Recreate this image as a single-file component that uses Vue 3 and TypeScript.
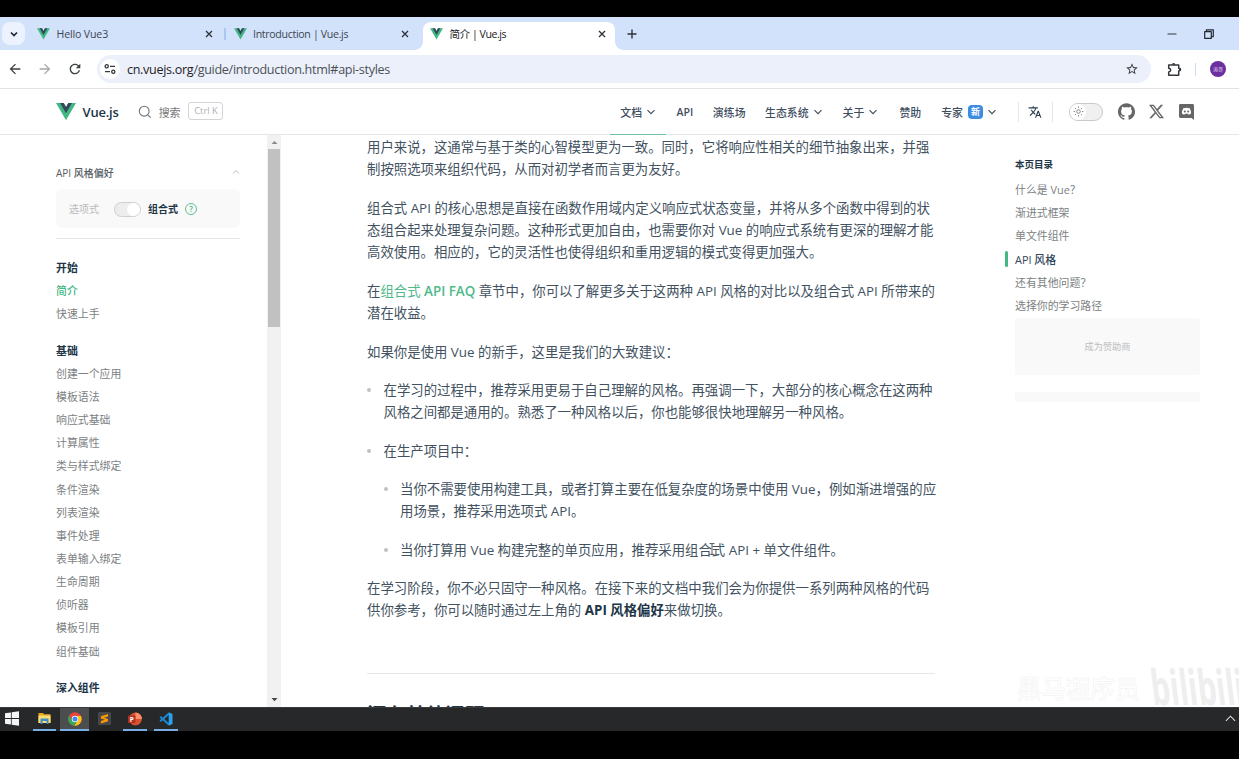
<script setup lang="ts">
interface Tab { title: string; active?: boolean; cls: string }
interface Group { title: string; items: string[] }

const tabs: Tab[] = [
  { title: 'Hello Vue3', cls: 't1' },
  { title: 'Introduction | Vue.js', cls: 't2' },
  { title: '简介 | Vue.js', active: true, cls: 't3' },
]
const nav = [
  { label: '文档', menu: true, current: true, cls: 'n1' },
  { label: 'API', cls: 'n2' },
  { label: '演练场', cls: 'n3' },
  { label: '生态系统', menu: true, cls: 'n4' },
  { label: '关于', menu: true, cls: 'n5' },
  { label: '赞助', cls: 'n6' },
  { label: '专家', menu: true, badge: '新', cls: 'n7' },
]
const groups: Group[] = [
  { title: '开始', items: ['简介', '快速上手'] },
  {
    title: '基础',
    items: ['创建一个应用', '模板语法', '响应式基础', '计算属性', '类与样式绑定', '条件渲染', '列表渲染',
      '事件处理', '表单输入绑定', '生命周期', '侦听器', '模板引用', '组件基础'],
  },
  { title: '深入组件', items: [] },
]
const outline = ['什么是 Vue？', '渐进式框架', '单文件组件', 'API 风格', '还有其他问题？', '选择你的学习路径']
</script>

<template>
  <div class="screen">
    <svg class="defs" width="0" height="0">
      <symbol id="vue" viewBox="0 0 128 112">
        <path fill="#42b883" d="M78.8 0 64 25.4 49.2 0H0l64 110L128 0z" />
        <path fill="#35495e" d="M78.8 0 64 25.4 49.2 0H25.6L64 66l38.4-66z" />
      </symbol>
      <symbol id="down" viewBox="0 0 10 10">
        <path d="M1.5 3.2 5 6.7l3.5-3.5" fill="none" stroke="currentColor" stroke-width="1.15" />
      </symbol>
    </svg>

    <div class="tabstrip">
      <div class="tabsearch">
        <svg width="10" height="10" viewBox="0 0 10 10"><path d="M2 3.5 5 6.5l3-3" fill="none" stroke="#1f2937" stroke-width="1.7" /></svg>
      </div>
      <div v-for="t in tabs" :key="t.title" class="tab" :class="[t.cls, { active: t.active }]">
        <svg class="fav"><use href="#vue" /></svg>
        <span class="tabtitle">{{ t.title }}</span>
        <svg class="close" viewBox="0 0 8 8"><path d="M1 1l6 6M7 1 1 7" stroke="#2b3038" stroke-width="1.3" /></svg>
      </div>
      <svg class="plus" viewBox="0 0 10 10"><path d="M5 .5v9M.5 5h9" stroke="#30353d" stroke-width="1.4" /></svg>
      <div class="grow"></div>
      <svg class="min" viewBox="0 0 10 10"><path d="M.5 5h9" stroke="#30353d" /></svg>
      <svg class="max" viewBox="0 0 10 10"><path d="M.7 2.7h6.6v6.6H.7zM2.4 2.5V.8h6.9v6.8H7.5" fill="none" stroke="#222831" stroke-width="1.2" stroke-linejoin="round" /></svg>
    </div>

    <div class="toolbar">
      <svg class="ic back" viewBox="0 0 24 24"><path fill="#3c4043" d="M20 11H7.83l5.59-5.59L12 4l-8 8 8 8 1.41-1.41L7.83 13H20v-2z" /></svg>
      <svg class="ic fwd" viewBox="0 0 24 24"><path fill="#a4a7ab" d="M4 11h12.17l-5.59-5.59L12 4l8 8-8 8-1.41-1.41L16.17 13H4z" /></svg>
      <svg class="ic reload" viewBox="0 0 24 24"><path fill="#3c4043" d="M17.65 6.35C16.2 4.9 14.21 4 12 4c-4.42 0-7.99 3.58-7.99 8s3.57 8 7.99 8c3.73 0 6.84-2.55 7.73-6h-2.08c-.82 2.33-3.04 4-5.65 4-3.31 0-6-2.69-6-6s2.69-6 6-6c1.66 0 3.14.69 4.22 1.78L13 11h7V4l-2.35 2.35z" /></svg>
      <div class="omnibox">
        <div class="site">
          <svg width="12" height="12" viewBox="0 0 12 12" fill="none" stroke="#33373c" stroke-width="1.3"><circle cx="2.7" cy="3.3" r="1.6" /><path d="M6 3.3h5M1 8.7h5" /><circle cx="9.3" cy="8.7" r="1.6" /></svg>
        </div>
        <span class="url"><b>cn.vuejs.org</b>/guide/introduction.html#api-styles</span>
        <svg class="star" viewBox="0 0 24 24"><path fill="#3c4043" d="M22 9.24l-7.19-.62L12 2 9.19 8.63 2 9.24l5.46 4.73L5.82 21 12 17.27 18.18 21l-1.63-7.03L22 9.24zM12 15.4l-3.76 2.27 1-4.28-3.32-2.88 4.38-.38L12 6.1l1.71 4.04 4.38.38-3.32 2.88 1 4.28L12 15.4z" /></svg>
      </div>
      <svg class="puzzle" viewBox="0 0 15 15"><path d="M1.7 3h10v3.2q1.8 0 1.8 1.4t-1.8 1.4v4.3h-10V10q2-.3 2-1.9t-2-1.9z" fill="none" stroke="#33373c" stroke-width="1.5" stroke-linejoin="round" /><path d="M5 2.8q0-1.9 1.7-1.9t1.7 1.9zM12 6q2 0 2 1.6t-2 1.6z" fill="#33373c" /></svg>
      <i class="tdiv"></i>
      <div class="avatar">涛哥</div>
    </div>

    <header class="head">
      <svg class="logo"><use href="#vue" /></svg>
      <span class="brand">Vue.js</span>
      <svg class="search" viewBox="0 0 14 14" fill="none" stroke="#6f7377" stroke-width="1.1"><circle cx="6.2" cy="6.2" r="4.9" /><path d="m9.8 9.8 2.8 2.8" /></svg>
      <span class="stext">搜索</span>
      <kbd>Ctrl K</kbd>
      <div class="grow"></div>
      <nav>
        <a v-for="n in nav" :key="n.label" :class="[n.cls, { current: n.current }]">
          <span>{{ n.label }}</span>
          <em v-if="n.badge">{{ n.badge }}</em>
          <svg v-if="n.menu" class="chev"><use href="#down" /></svg>
        </a>
      </nav>
      <i class="hdiv d1"></i>
      <svg class="lang" viewBox="0 0 24 24"><path fill="#2c3e50" d="M12.87 15.07l-2.54-2.51.03-.03c1.74-1.94 2.98-4.17 3.71-6.53H17V4h-7V2H8v2H1v1.99h11.17C11.5 7.92 10.44 9.75 9 11.35 8.07 10.32 7.3 9.19 6.69 8h-2c.73 1.63 1.73 3.17 2.98 4.56l-5.09 5.02L4 19l5-5 3.11 3.11.76-2.04zM18.5 10h-2L12 22h2l1.12-3h4.75L21 22h2l-4.5-12zm-2.62 7l1.62-4.33L19.12 17h-3.24z" /></svg>
      <i class="hdiv d2"></i>
      <div class="theme">
        <div class="knob">
          <svg width="11" height="11" viewBox="0 0 12 12" fill="none" stroke="#777" stroke-width=".9"><circle cx="6" cy="6" r="2" /><path d="M6 .6v1.6M6 9.8v1.6M.6 6h1.6M9.8 6h1.6M2.2 2.2l1.1 1.1M8.7 8.7l1.1 1.1M2.2 9.8l1.1-1.1M8.7 3.3l1.1-1.1" /></svg>
        </div>
      </div>
      <svg class="gh" viewBox="0 0 24 24"><path fill="#666" d="M12 .297c-6.63 0-12 5.373-12 12 0 5.303 3.438 9.8 8.205 11.385.6.113.82-.258.82-.577 0-.285-.01-1.04-.015-2.04-3.338.724-4.042-1.61-4.042-1.61C4.422 18.07 3.633 17.7 3.633 17.7c-1.087-.744.084-.729.084-.729 1.205.084 1.838 1.236 1.838 1.236 1.07 1.835 2.809 1.305 3.495.998.108-.776.417-1.305.76-1.605-2.665-.3-5.466-1.332-5.466-5.93 0-1.31.465-2.38 1.235-3.22-.135-.303-.54-1.523.105-3.176 0 0 1.005-.322 3.3 1.23.96-.267 1.98-.399 3-.405 1.02.006 2.04.138 3 .405 2.28-1.552 3.285-1.23 3.285-1.23.645 1.653.24 2.873.12 3.176.765.84 1.23 1.91 1.23 3.22 0 4.61-2.805 5.625-5.475 5.92.42.36.81 1.096.81 2.22 0 1.606-.015 2.896-.015 3.286 0 .315.21.69.825.57C20.565 22.092 24 17.592 24 12.297c0-6.627-5.373-12-12-12" /></svg>
      <svg class="xx" viewBox="0 0 24 24"><path fill="#666" d="M18.901 1.153h3.68l-8.04 9.19L24 22.846h-7.406l-5.8-7.584-6.638 7.584H.474l8.6-9.83L0 1.154h7.594l5.243 6.932ZM17.61 20.644h2.039L6.486 3.24H4.298Z" /></svg>
      <svg class="dc" viewBox="0 0 16 17"><path fill="#666" d="M1.5 0h13Q16 0 16 1.5V17l-2.6-2.2H1.5Q0 14.8 0 13.3V1.5Q0 0 1.5 0z" /><path fill="#fff" d="M4.6 4.4Q8 3.4 11.4 4.4 13 7 12.9 10.2 11.7 11.3 10.3 11.3L9.7 10.4H6.3l-.6.9Q4.3 11.3 3.1 10.2 3 7 4.6 4.4z" /><circle cx="6.2" cy="8" r="1.1" fill="#666" /><circle cx="9.8" cy="8" r="1.1" fill="#666" /></svg>
    </header>

    <div class="page">
      <aside class="side">
        <div class="pref">
          <span>API 风格偏好</span>
          <svg width="8" height="8" viewBox="0 0 8 8"><path d="M1 5.5 4 2.5l3 3" fill="none" stroke="#aaa" stroke-width=".8" /></svg>
        </div>
        <div class="switchbox">
          <span class="opt">选项式</span>
          <div class="switch"><i></i></div>
          <span class="comp">组合式</span>
          <span class="help">?</span>
        </div>
        <section v-for="(g, gi) in groups" :key="g.title">
          <h2>{{ g.title }}</h2>
          <a v-for="(it, i) in g.items" :key="it" :class="{ on: gi === 0 && i === 0 }">{{ it }}</a>
        </section>
      </aside>
      <div class="scroll">
        <svg width="13" height="14" viewBox="0 0 13 14"><path d="M3.5 9 6.5 6l3 3z" fill="#8a8a8a" /></svg>
        <div class="thumb"></div>
        <div class="grow"></div>
        <svg width="13" height="14" viewBox="0 0 13 14"><path d="M3.5 6h6l-3 3.2z" fill="#444" /></svg>
      </div>
      <main class="doc">
        <p><span class="l">用户来说，这通常与基于类的心智模型更为一致。同时，它将响应性相关的细节抽象出来，并强</span><span class="l">制按照选项来组织代码，从而对初学者而言更为友好。</span></p>
        <p><span class="l">组合式 API 的核心思想是直接在函数作用域内定义响应式状态变量，并将从多个函数中得到的状</span><span class="l">态组合起来处理复杂问题。这种形式更加自由，也需要你对 Vue 的响应式系统有更深的理解才能</span><span class="l">高效使用。相应的，它的灵活性也使得组织和重用逻辑的模式变得更加强大。</span></p>
        <p><span class="l">在<a>组合式 <b>API FAQ</b></a> 章节中，你可以了解更多关于这两种 API 风格的对比以及组合式 API 所带来的</span><span class="l">潜在收益。</span></p>
        <p><span class="l">如果你是使用 Vue 的新手，这里是我们的大致建议：</span></p>
        <ul>
          <li><p><span class="l">在学习的过程中，推荐采用更易于自己理解的风格。再强调一下，大部分的核心概念在这两种</span><span class="l">风格之间都是通用的。熟悉了一种风格以后，你也能够很快地理解另一种风格。</span></p></li>
          <li>
            <p><span class="l">在生产项目中：</span></p>
            <ul>
              <li><p><span class="l">当你不需要使用构建工具，或者打算主要在低复杂度的场景中使用 Vue，例如渐进增强的应</span><span class="l">用场景，推荐采用选项式 API。</span></p></li>
              <li><p><span class="l">当你打算用 Vue 构建完整的单页应用，推荐采用组合式 API + 单文件组件。</span></p></li>
            </ul>
          </li>
        </ul>
        <p><span class="l">在学习阶段，你不必只固守一种风格。在接下来的文档中我们会为你提供一系列两种风格的代码</span><span class="l">供你参考，你可以随时通过左上角的 <strong>API 风格偏好</strong>来做切换。</span></p>
        <h2>还有其他问题？</h2>
        <svg class="caret" viewBox="0 0 6 12"><path d="M.5 .6h5M.5 11.4h5M3 .6v10.8" stroke="#444" stroke-width=".9" /></svg>
      </main>
      <aside class="toc">
        <h3>本页目录</h3>
        <a v-for="o in outline" :key="o" :class="{ on: o === 'API 风格' }">{{ o }}</a>
        <div class="sponsor">成为赞助商</div>
        <div class="slot"></div>
      </aside>
      <div class="wm1">黑马程序员</div>
      <div class="wm2">bilibili</div>
    </div>

    <div class="taskbar">
      <div class="task win"><svg width="14" height="15" viewBox="0 0 14 15" fill="#f4f4f4"><path d="M0 2.2 5.9 1.4v5.7H0zM6.7 1.3 14 .3v6.8H6.7zM0 7.9h5.9v5.7L0 12.8zM6.7 7.9H14v6.8l-7.3-1z" /></svg></div>
      <div class="task ex run"><svg width="13" height="13" viewBox="0 0 13 13"><path fill="#e9a820" d="M.5 1H5l1 1.3h6.5V11H.5z" /><path fill="#fbdc79" d="M.5 3.6h12V11H.5z" /><path fill="#3f8fc4" d="M2.5 6.5h8V12h-2V9h-4v3h-2z" /></svg></div>
      <div class="task ch run"><svg width="14" height="14" viewBox="0 0 14 14"><circle cx="7" cy="7" r="6.7" fill="#e8453c" /><path fill="#34a853" d="M1.2 3.6A6.7 6.7 0 0 0 6.5 13.7L9.7 8.5 7 7 4.3 8.5z" /><path fill="#fbc116" d="M12.9 4H7l2.7 4.5-3.2 5.2A6.7 6.7 0 0 0 12.9 4z" /><circle cx="7" cy="7" r="3.2" fill="#fff" /><circle cx="7" cy="7" r="2.5" fill="#4285f4" /></svg></div>
      <div class="task su"><svg width="13" height="13" viewBox="0 0 13 13"><rect width="13" height="13" rx="1.5" fill="#47484a" /><path fill="#ff9800" d="M3 4.3 10 2v2.5L6 5.8l4 1.3v2.2L3 11.5V9l4-1.3L3 6.4z" /></svg></div>
      <div class="task pp run"><svg width="14" height="14" viewBox="0 0 14 14"><circle cx="7.4" cy="7" r="6.5" fill="#d35230" /><path fill="#ff8f6b" d="M7.4.5A6.5 6.5 0 0 1 13.9 7H7.4z" /><rect y="3.5" width="7.5" height="7.5" rx=".8" fill="#b7321c" /><text x="1.8" y="9.7" font-size="6.5" font-weight="700" fill="#fff" font-family="Open Sans, sans-serif">P</text></svg></div>
      <div class="task vs run"><svg width="14" height="14" viewBox="0 0 14 14"><path d="M10 1.5 1.2 9.3M10 12.5 1.2 4.7" stroke="#1c86d1" stroke-width="2.1" /><path fill="#2ba0ee" d="M9.7.3 13.5 2v10l-3.8 1.7z" /></svg></div>
      <div class="grow"></div>
      <svg class="tray" viewBox="0 0 12 7"><path d="M1 6l5-5 5 5" fill="none" stroke="#e4e4e4" stroke-width="1.1" /></svg>
    </div>
  </div>
</template>

<style>
body { margin: 0; background: #000; overflow: hidden; }
</style>

<style scoped>
* { box-sizing: border-box; }
.screen { width: 1239px; height: 759px; padding-top: 17px; background: #000; overflow: hidden; display: flex; flex-direction: column; font-family: "Open Sans", "Noto Sans CJK SC", sans-serif; white-space: nowrap; }
.defs { position: absolute; }
.grow { flex: 1; }
svg { display: block; flex: none; }

.tabstrip { height: 33px; flex: none; background: #d3e2fb; display: flex; align-items: center; }
.tabsearch { width: 23px; height: 23px; margin: 0 5px 0 2px; border-radius: 8px; background: #ecf3fe; display: flex; align-items: center; justify-content: center; flex: none; }
.tab { height: 28px; display: flex; align-items: center; align-self: flex-end; padding-left: 7px; flex: none; font-size: 10.6px; color: #3d4650; position: relative; }
.t1 { width: 195px; letter-spacing: -.15px; }
.t2 { width: 197px; margin-left: 1px; padding-left: 7.5px; letter-spacing: -.32px; }
.t2::before { content: ""; position: absolute; left: -2px; top: 6px; width: 1.5px; height: 12px; background: #a9c6f7; }
.t3 { width: 192px; height: 28px; margin-left: 0; background: #fff; border-radius: 8px 8px 0 0; color: #222; letter-spacing: -.48px; }
.t3::before, .t3::after { content: ""; position: absolute; bottom: 0; width: 8px; height: 8px; }
.t3::before { left: -8px; background: radial-gradient(circle at 0 0, transparent 7.5px, #fff 8px); }
.t3::after { right: -8px; background: radial-gradient(circle at 100% 0, transparent 7.5px, #fff 8px); }
.fav { width: 13px; height: 12px; margin-top: -5px; margin-right: 6.5px; }
.tabtitle { flex: 1; margin-top: -5px; }
.close { width: 8px; height: 8px; margin-right: 9.5px; margin-top: -5px; }
.t1 .close { margin-right: 12.5px; }
.t2 .close { margin-right: 14px; }
.plus { width: 10px; height: 10px; margin-left: 12px; }
.min { width: 10px; height: 10px; margin-right: 27px; }
.max { width: 10px; height: 10px; margin-right: 25px; }

.toolbar { height: 39px; flex: none; background: #fff; border-bottom: 1px solid #dfe2e6; display: flex; align-items: center; padding-left: 7px; }
.ic { width: 16px; height: 16px; }
.fwd { margin-left: 14px; }
.reload { margin-left: 14px; }
.omnibox { width: 1054px; height: 28px; margin-left: 14px; border-radius: 14px; background: #ebf0fb; display: flex; align-items: center; padding-left: 3px; }
.site { width: 20px; height: 20px; border-radius: 50%; background: #fff; display: flex; align-items: center; justify-content: center; flex: none; }
.url { flex: 1; margin-left: 7px; font-size: 12.6px; letter-spacing: -.32px; color: #4b5056; }
.url b { font-weight: 400; color: #1f2226; }
.star { width: 14px; height: 14px; margin-right: 12px; }
.puzzle { width: 15px; height: 15px; margin-left: 16px; }
.tdiv { width: 1px; height: 13px; background: #cddcf6; margin: 0 14px 0 13px; }
.avatar { width: 16px; height: 16px; border-radius: 50%; background: #6b2f9f; color: #e9dcf5; font-size: 5px; line-height: 16px; text-align: center; flex: none; }

.head { height: 46px; flex: none; background: #fff; border-bottom: 1px solid #e5e6e8; display: flex; align-items: center; padding-left: 56px; position: relative; }
.logo { width: 20px; height: 17.5px; }
.brand { margin-left: 6.5px; font-size: 13px; font-weight: 600; letter-spacing: -.2px; color: #213547; line-height: 20px; margin-top: 1px; }
.search { width: 14px; height: 14px; margin-left: 19px; }
.stext { margin-left: 7px; font-size: 10.9px; color: #777; }
kbd { margin-left: 8px; width: 35px; height: 18px; border: 1px solid #d4d4d6; border-radius: 3px; font: 9.4px/16px "Open Sans", sans-serif; color: #b0b0b2; text-align: center; margin-top: -1px; }
nav { display: flex; height: 45px; margin-right: 21px; }
nav a { display: flex; align-items: center; font-size: 10.9px; font-weight: 500; color: #3f4f5f; position: relative; }
.chev { width: 10px; height: 10px; margin-left: 4px; }
.n2 { margin-left: 20.5px; font-weight: 600; font-size: 10.6px; }
.n3 { margin-left: 19.5px; }
.n4 { margin-left: 19.5px; }
.n5 { margin-left: 20px; }
.n6 { margin-left: 21px; }
.n7 { margin-left: 20px; }
.current::after { content: ""; position: absolute; left: -10px; right: -10px; bottom: -1px; height: 1px; background: #6fc3a0; }
nav em { width: 15px; height: 14px; margin-left: 5px; border-radius: 4px; background: #3b8be0; color: #fff; font: 700 9px/13px "Noto Sans CJK SC", sans-serif; text-align: center; }
.hdiv { width: 1px; height: 20px; background: #e6e6e8; }
.lang { width: 14px; height: 14px; margin: 0 10px 0 9px; }
.theme { width: 34px; height: 18px; margin-left: 16px; margin-right: 15px; border: 1px solid #c9c9cb; border-radius: 9px; background: #f0f0f1; }
.knob { width: 16px; height: 16px; border-radius: 50%; background: #fff; display: flex; align-items: center; justify-content: center; }
.gh { width: 17px; height: 17px; }
.xx { width: 15px; height: 15px; margin-left: 14px; }
.dc { width: 15px; height: 16px; margin-left: 15px; margin-right: 45px; }

.page { height: 572px; flex: none; background: #fff; display: flex; overflow: hidden; position: relative; }
.side { width: 267px; flex: none; padding: 27px 27px 0 56px; overflow: hidden; }
.pref { height: 20px; display: flex; align-items: center; justify-content: space-between; font-size: 10px; font-weight: 500; color: #555c63; }
.switchbox { height: 39px; margin-top: 7px; border-radius: 6px; background: #f9f9f9; display: flex; align-items: center; padding-left: 13px; font-size: 10px; }
.opt { color: #b8b8ba; }
.switch { width: 27px; height: 15px; margin: 1px 7px 0 15px; border: 1px solid #cfcfd1; border-radius: 8px; background: #ededee; display: flex; justify-content: flex-end; }
.switch i { width: 13px; height: 13px; border-radius: 50%; background: #fff; }
.comp { font-weight: 700; color: #213547; }
.help { width: 12px; height: 12px; margin-left: 7px; border: 1px solid #5fbf97; border-radius: 50%; color: #42b883; font-size: 8px; line-height: 10px; text-align: center; font-weight: 600; }
.side section { padding-bottom: 13.2px; }
.side section:first-of-type { margin-top: 10px; border-top: 1px solid #e8e8ea; padding-top: 17px; }
.side h2 { margin: 0; height: 23.2px; font-size: 10.9px; font-weight: 700; line-height: 23.2px; color: #213547; }
.side section a { display: block; height: 23.15px; font-size: 10.9px; line-height: 23.15px; color: #7c7f83; }
.side section a.on { color: #42b883; font-weight: 500; }
.scroll { width: 14px; flex: none; background: #f1f1f1; display: flex; flex-direction: column; align-items: center; padding-bottom: 1px; }
.thumb { width: 12px; height: 178px; background: #c1c1c1; }

.doc { width: 568px; margin-left: 86px; padding-top: .9px; flex: none; font-size: 13.4px; line-height: 22.4px; color: #425261; position: relative; }
.doc p { margin: 0 0 15.95px; }
.l { display: block; }
.doc a { color: #4fb98b; font-weight: 400; }
.doc a b { font-weight: 600; }
.doc strong { font-weight: 700; color: #213547; }
.doc ul { list-style: none; margin: 0; padding: 0; }
.doc li { padding-left: 16.5px; position: relative; }
.doc li::before { content: ""; position: absolute; left: 0; top: 9.3px; width: 4px; height: 4px; border-radius: 50%; background: #c0c1c3; }
.doc h2 { margin: 51.5px 0 0; padding-top: 26.5px; border-top: 1px solid #e8e8ea; font-size: 19.5px; line-height: 28px; font-weight: 700; color: #213547; }
.caret { position: absolute; left: 342px; top: 408px; width: 6px; height: 12px; }

.toc { width: 185px; margin-left: 80px; padding-top: 19.4px; flex: none; }
.toc h3 { margin: 0 0 2.1px; height: 21.5px; font-size: 9.5px; line-height: 21.5px; font-weight: 700; color: #213547; }
.toc a { display: block; height: 23.2px; line-height: 23.2px; font-size: 10.9px; color: #7c7f83; position: relative; }
.toc a.on { color: #33475a; font-weight: 500; }
.toc a.on::before { content: ""; position: absolute; left: -10px; top: 3.5px; width: 3px; height: 16px; border-radius: 2px; background: #42b883; }
.sponsor { height: 57px; margin-top: 1px; background: #f9f9f9; border-radius: 2px; font-size: 9.2px; line-height: 57px; text-align: center; color: #bdbdbf; }
.slot { height: 10px; margin-top: 17px; background: #f9f9f9; }
.wm1 { position: absolute; left: 1017px; top: 537px; font: 500 24.5px/32px "Noto Sans CJK SC", sans-serif; color: #fff; -webkit-text-stroke: .5px #f0f0f0; }
.wm2 { position: absolute; left: 1153px; top: 521px; font: 700 49px/60px "Open Sans", sans-serif; color: #eee; transform: skewX(7deg) scaleX(.61); transform-origin: 0 80%; }

.taskbar { height: 24px; flex: none; background: #27282a; border-top: 1px solid #3a3b3c; display: flex; align-items: center; }
.task { height: 23px; width: 24px; display: flex; align-items: center; justify-content: center; flex: none; }
.run { box-shadow: inset 0 -2px #76b0e6; }
.win { padding-bottom: 2px; width: 23px; }
.ex { margin-left: 10px; width: 23px; }
.ch { margin-left: 4px; width: 29px; background: #4c4d4f; }
.su { margin-left: 3px; }
.su svg { margin-top: -2px; }
.run svg { margin-top: -2px; }
.pp { margin-left: 7px; }
.vs { margin-left: 7px; }
.tray { width: 11px; height: 7px; margin-right: 3px; margin-top: -2px; }
</style>
